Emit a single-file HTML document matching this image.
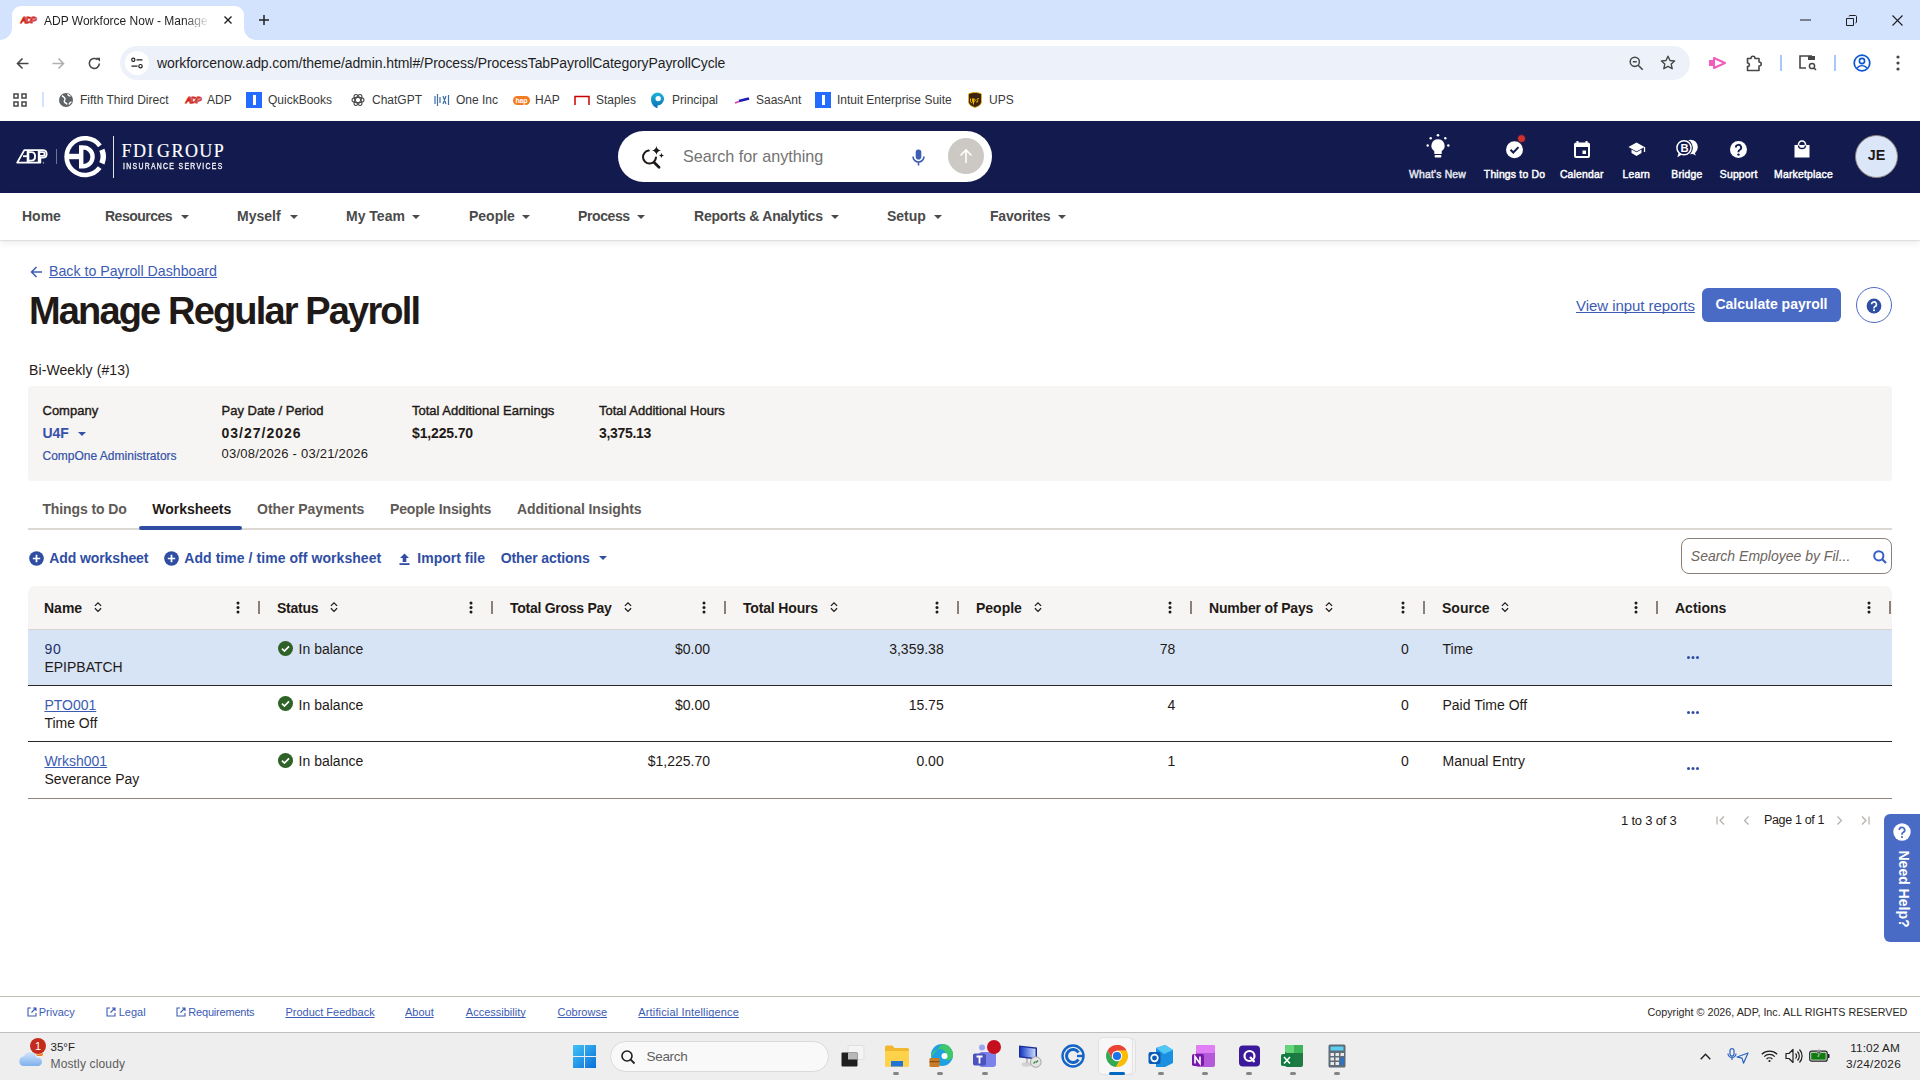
<!DOCTYPE html>
<html><head><meta charset="utf-8">
<style>
*{box-sizing:border-box;margin:0;padding:0}
html,body{width:1920px;height:1080px;overflow:hidden;background:#fff;font-family:"Liberation Sans",sans-serif;color:#1f1f1f}
.a{position:absolute;white-space:nowrap;line-height:1}
svg{position:absolute;overflow:visible}
.bm{font-size:12px;color:#3a3a3a;top:93.6px}
.nv{font-size:14px;font-weight:bold;color:#4a4a4a;top:209.4px}
.car{position:absolute;width:0;height:0;border-left:4px solid transparent;border-right:4px solid transparent;border-top:4px solid #4a4a4a;top:215px}
.hl{font-size:10.4px;color:#fff;top:169.8px;letter-spacing:0.2px;-webkit-text-stroke:0.45px #fff}
.th{font-size:14px;font-weight:bold;color:#1f1a17;top:600.6px}
.srt{position:relative !important;display:inline-block;margin-left:12px;top:1.4px;vertical-align:top}
.td{font-size:14px;color:#1f1a17}
.ft{font-size:11px;color:#3c5cb4;top:1006.9px;text-decoration:underline;text-underline-offset:1.2px;text-decoration-skip-ink:none}
.tbi{position:absolute;top:1072.3px;width:6px;height:3px;border-radius:1.5px;background:#858585}
</style></head><body>
<!-- ============ TAB STRIP ============ -->
<div style="position:absolute;left:0;top:0;width:1920px;height:40px;background:#d3e3fd"></div>
<div style="position:absolute;left:12px;top:6px;width:232px;height:34px;background:#fff;border-radius:9px 9px 0 0"></div>
<div style="position:absolute;left:0px;top:28px;width:12px;height:12px;background:radial-gradient(circle at 0 0,#d3e3fd 11.5px,#fff 12.2px)"></div>
<div style="position:absolute;left:244px;top:28px;width:12px;height:12px;background:radial-gradient(circle at 100% 0,#d3e3fd 11.5px,#fff 12.2px)"></div>
<svg style="left:20px;top:15.5px" width="16" height="8" viewBox="0 0 32 16"><text x="1" y="14.5" font-family="Liberation Sans" font-weight="bold" font-style="italic" font-size="17.5" fill="#fff" stroke="#d0271d" stroke-width="1.7" letter-spacing="-2.4">ADP</text></svg>
<div class="a" style="left:44px;top:14.6px;font-size:12px;color:#1f1f1f;width:166px;overflow:hidden;-webkit-mask-image:linear-gradient(90deg,#000 140px,transparent 166px)">ADP Workforce Now - Manage Regular Payroll</div>
<svg style="left:224px;top:16px" width="8" height="8"><path d="M0.5 0.5l7 7M7.5 0.5l-7 7" stroke="#1f1f1f" stroke-width="1.4"/></svg>
<svg style="left:259px;top:15px" width="10" height="10"><path d="M5 0v10M0 5h10" stroke="#1f1f1f" stroke-width="1.5"/></svg>
<svg style="left:1800px;top:19px" width="11" height="2"><path d="M0 1h11" stroke="#1f1f1f" stroke-width="1"/></svg>
<svg style="left:1846px;top:15px" width="11" height="11"><path d="M0.5 3.5h7v7h-7z" stroke="#1f1f1f" stroke-width="1" fill="none"/><path d="M3 1.5c0-1 .5-1 1-1h5.5c.5 0 1 .5 1 1V7c0 .5-.5 1-1 1" stroke="#1f1f1f" stroke-width="1" fill="none"/></svg>
<svg style="left:1892px;top:15px" width="11" height="11"><path d="M0.5 0.5l10 10M10.5 0.5l-10 10" stroke="#1f1f1f" stroke-width="1.1"/></svg>

<!-- ============ TOOLBAR ============ -->
<div style="position:absolute;left:0;top:40px;width:1920px;height:81px;background:#fff"></div>
<svg style="left:16px;top:57px" width="13" height="13"><path d="M12.5 6.5H1.5M6.5 1.5l-5 5 5 5" stroke="#474747" stroke-width="1.6" fill="none"/></svg>
<svg style="left:52px;top:57px" width="13" height="13"><path d="M0.5 6.5h11M6.5 1.5l5 5-5 5" stroke="#b0b0b0" stroke-width="1.6" fill="none"/></svg>
<svg style="left:88px;top:57px" width="13" height="13"><path d="M11.3 6.5A5 5 0 1 1 9.5 2.6" stroke="#474747" stroke-width="1.6" fill="none"/><path d="M8 0.8h4v4z" fill="#474747"/></svg>
<div style="position:absolute;left:120px;top:46px;width:1570px;height:34px;background:#edf2fa;border-radius:17px"></div>
<div style="position:absolute;left:125px;top:51px;width:24px;height:24px;border-radius:12px;background:#fff"></div>
<svg style="left:131px;top:57px" width="12" height="12"><circle cx="2.3" cy="2.8" r="1.6" stroke="#1f1f1f" stroke-width="1.2" fill="none"/><path d="M5.5 2.8h6M0.5 9.2h6" stroke="#1f1f1f" stroke-width="1.2"/><circle cx="9.5" cy="9.2" r="1.7" stroke="#1f1f1f" stroke-width="1.2" fill="none"/></svg>
<div class="a" style="left:157px;top:56.2px;font-size:14px;color:#1f1f1f;letter-spacing:-0.08px">workforcenow.adp.com/theme/admin.html#/Process/ProcessTabPayrollCategoryPayrollCycle</div>
<svg style="left:1629px;top:56px" width="15" height="15"><circle cx="5.8" cy="5.8" r="4.6" stroke="#474747" stroke-width="1.5" fill="none"/><path d="M3.8 5.8h4M9.2 9.2l4.5 4.5" stroke="#474747" stroke-width="1.6"/></svg>
<svg style="left:1660px;top:55px" width="16" height="16"><path d="M8 1.2l2 4.3 4.6.5-3.4 3.1 1 4.6L8 11.4l-4.2 2.3 1-4.6L1.4 6l4.6-.5z" stroke="#474747" stroke-width="1.4" fill="none" stroke-linejoin="round"/></svg>
<svg style="left:1709px;top:56px" width="18" height="14"><path d="M0 4h4v6H0z" fill="#f35bbd"/><path d="M5 2l11 5-11 5z" stroke="#f35bbd" stroke-width="2" fill="none" stroke-linejoin="round"/></svg>
<svg style="left:1746px;top:54px" width="17" height="18"><path d="M1.5 4.5h3.5c0-3 4-3 4 0h4v3.5c3 0 3 4 0 4v4.5h-11.5v-4c2.5 0 2.5-3.5 0-3.5z" stroke="#474747" stroke-width="1.6" fill="none" stroke-linejoin="round"/></svg>
<div style="position:absolute;left:1780px;top:55px;width:2px;height:16px;background:#a8c7fa"></div>
<svg style="left:1799px;top:55px" width="18" height="16"><path d="M13 1H1v12h6" stroke="#474747" stroke-width="1.6" fill="none"/><path d="M9 1h7v4H9z" fill="#474747"/><circle cx="13" cy="11" r="2.6" stroke="#474747" stroke-width="1.5" fill="none"/><path d="M14.8 12.8l2.2 2.2" stroke="#474747" stroke-width="1.6"/></svg>
<div style="position:absolute;left:1834px;top:55px;width:2px;height:16px;background:#a8c7fa"></div>
<svg style="left:1853px;top:54px" width="18" height="18"><circle cx="9" cy="9" r="7.8" stroke="#0b57d0" stroke-width="1.7" fill="none"/><circle cx="9" cy="7" r="2.6" stroke="#0b57d0" stroke-width="1.6" fill="none"/><path d="M4 14c3-3 7-3 10 0" stroke="#0b57d0" stroke-width="1.6" fill="none"/></svg>
<svg style="left:1896px;top:55px" width="4" height="16"><circle cx="2" cy="2" r="1.6" fill="#474747"/><circle cx="2" cy="8" r="1.6" fill="#474747"/><circle cx="2" cy="14" r="1.6" fill="#474747"/></svg>

<!-- bookmarks -->
<svg style="left:13px;top:93px" width="14" height="14"><path d="M1 1h4v4H1zM9 1h4v4H9zM1 9h4v4H1zM9 9h4v4H9z" stroke="#474747" stroke-width="1.5" fill="none"/></svg>
<div style="position:absolute;left:42px;top:92px;width:2px;height:15px;background:#d3e3fd"></div>
<svg style="left:59px;top:93px" width="14" height="14"><circle cx="7" cy="7" r="7" fill="#5f6368"/><path d="M3 2.5c1 1.5 2.5 1.5 3 3s-1.5 2-.5 3.5 2 .5 2.5 2.5M9 1c0 1.5 1 2 2.5 2M12.5 9c-1.5 0-2 1-2.5 2.5" stroke="#fff" stroke-width="1.4" fill="none"/></svg>
<div class="a bm" style="left:80px">Fifth Third Direct</div>
<svg style="left:185px;top:96px" width="16" height="8" viewBox="0 0 32 16"><text x="1" y="14.5" font-family="Liberation Sans" font-weight="bold" font-style="italic" font-size="17.5" fill="#fff" stroke="#d0271d" stroke-width="1.7" letter-spacing="-2.4">ADP</text></svg>
<div class="a bm" style="left:207px">ADP</div>
<div style="position:absolute;left:246px;top:92px;width:16px;height:16px;background:#236cff"></div>
<div style="position:absolute;left:252.5px;top:95px;width:3px;height:10px;background:#fff"></div>
<div class="a bm" style="left:268px">QuickBooks</div>
<svg style="left:351px;top:93px" width="14" height="14" viewBox="0 0 14 14"><g fill="none" stroke="#4a4a4a" stroke-width="1.15"><ellipse cx="7" cy="7" rx="6" ry="2.6"/><ellipse cx="7" cy="7" rx="6" ry="2.6" transform="rotate(60 7 7)"/><ellipse cx="7" cy="7" rx="6" ry="2.6" transform="rotate(120 7 7)"/></g></svg>
<div class="a bm" style="left:372px">ChatGPT</div>
<svg style="left:434px;top:92px" width="16" height="16"><path d="M1 4v8M3.5 2v12M6 5v6M9 4l3 8M12 4l-3 8M14.5 3v10" stroke="#3d6fa6" stroke-width="1.2"/></svg>
<div class="a bm" style="left:456px">One Inc</div>
<div style="position:absolute;left:513px;top:96px;width:17px;height:8.5px;border-radius:4.3px;background:#f37b20"></div>
<div class="a" style="left:515.5px;top:96.6px;font-size:7px;font-weight:bold;color:#fff;letter-spacing:-0.2px">hap</div>
<div class="a bm" style="left:535px">HAP</div>
<svg style="left:574px;top:95px" width="16" height="12"><path d="M1 10V1.5h14V10" stroke="#cc0000" stroke-width="1.5" fill="none"/></svg>
<div class="a bm" style="left:596px">Staples</div>
<svg style="left:650px;top:91px" width="16" height="18" viewBox="0 0 16 18"><defs><linearGradient id="pg" x1="0" y1="0" x2="0" y2="1"><stop offset="0" stop-color="#1fb5d6"/><stop offset="1" stop-color="#0a6eb8"/></linearGradient></defs><path d="M7.5 1.5A6.5 6.5 0 1 1 7.5 14.5V17.2C3.8 16.2 1 13 1 8A6.5 6.5 0 0 1 7.5 1.5z" fill="url(#pg)"/><circle cx="8.2" cy="7.6" r="2.7" fill="#fff"/></svg>
<div class="a bm" style="left:672px">Principal</div>
<svg style="left:735px;top:97px" width="15" height="7"><path d="M4 4l10-2.5" stroke="#1b1bb4" stroke-width="2.5"/><path d="M0 6l4-1.5" stroke="#e535ab" stroke-width="1.5"/></svg>
<div class="a bm" style="left:756px">SaasAnt</div>
<div style="position:absolute;left:815px;top:92px;width:16px;height:16px;background:#236cff"></div>
<div style="position:absolute;left:821.5px;top:95px;width:3px;height:10px;background:#fff"></div>
<div class="a bm" style="left:837px">Intuit Enterprise Suite</div>
<svg style="left:968px;top:92px" width="14" height="16"><path d="M7 0.5C4.5 0.5 2 1 0.5 2v7.5c0 3 3 5 6.5 6 3.5-1 6.5-3 6.5-6V2C12 1 9.5.5 7 .5z" fill="#3a2410" stroke="#f7b500" stroke-width="0.8"/><path d="M2.5 6.5v3c0 1.5 2 1.5 2 0v-3M5.5 6.5v6M5.5 7c2-1 2.5 3 0 3M11 6.8c-1.5-.7-2.5.5-1.5 1.5s0 2.5-1.5 1.5" stroke="#f7b500" stroke-width="1" fill="none"/></svg>
<div class="a bm" style="left:989px">UPS</div>

<!-- ============ ADP HEADER ============ -->
<div style="position:absolute;left:0;top:121px;width:1920px;height:72px;background:#131b4e"></div>
<svg style="left:12px;top:144px" width="40" height="24" viewBox="0 0 40 24"><g stroke="#fff" fill="none"><path d="M12.3 6.1H30.8C33.3 6.1 34.6 8 34.6 9.9C34.6 12 33.1 13.5 30.9 13.5H28.3V18.6H5.2z" stroke-width="1.9" stroke-linejoin="round"/><path d="M16 7v11" stroke-width="2.6"/><path d="M11 12.2h5" stroke-width="1.8"/><path d="M17 8.1h2.2c2.6 0 3.9 2 3.9 4.2s-1.3 4.3-3.9 4.3H17" stroke-width="1.9"/><path d="M27 7v11.6" stroke-width="2.4"/><path d="M28 8.1h2.6c1.4 0 2 .9 2 1.8s-.7 1.8-2 1.8H28" stroke-width="1.6"/></g><circle cx="31.4" cy="18.8" r="0.6" fill="#fff"/></svg>
<div style="position:absolute;left:56px;top:149px;width:1px;height:15px;background:#6f7598"></div>
<svg style="left:64px;top:135px" width="44" height="44" viewBox="0 0 44 44"><path d="M35.9 10.8A18.4 18.4 0 1 0 35.7 32.7" stroke="#fff" stroke-width="4.6" fill="none"/><path d="M37.9 14.8A18.2 18.2 0 0 1 37.9 28.4" stroke="#fff" stroke-width="5.5" fill="none"/><path d="M17.2 10.2V33.4M17.2 12.4h2a9.4 9.4 0 0 1 0 18.8h-2" stroke="#fff" stroke-width="4.4" fill="none"/><rect x="4.7" y="18.8" width="14.3" height="5.4" fill="#fff"/></svg>
<div style="position:absolute;left:112.8px;top:136px;width:1.3px;height:42px;background:#e2e3ea"></div>
<div class="a" style="left:121.5px;top:141.8px;font-family:'Liberation Serif',serif;font-size:18px;color:#fff;letter-spacing:1.4px;word-spacing:-3.5px;-webkit-text-stroke:0.15px #fff">FDI GROUP</div>
<div class="a" style="left:122.6px;top:162.2px;font-size:9px;color:#f4f4f8;letter-spacing:1.75px;-webkit-text-stroke:0.35px #f4f4f8;transform:scaleX(0.76);transform-origin:0 0">INSURANCE SERVICES</div>

<!-- search -->
<div style="position:absolute;left:618px;top:131px;width:374px;height:51px;background:#fff;border-radius:25.5px"></div>
<svg style="left:636px;top:141px" width="34" height="30" viewBox="0 0 34 30"><path d="M12.8 9.6A6.5 6.5 0 1 0 20 16.4" stroke="#1f1a17" stroke-width="2" fill="none" stroke-linecap="round"/><path d="M18.2 21.6L23 26.2" stroke="#1f1a17" stroke-width="2.8" stroke-linecap="round"/><path d="M20.4 5Q21 9 25 9.4Q21 10 20.4 14Q19.8 10 16 9.4Q19.8 9 20.4 5z" fill="#1f1a17"/><path d="M25.4 12Q25.7 14.1 28 14.4Q25.7 14.7 25.4 17Q25.1 14.7 23 14.4Q25.1 14.1 25.4 12z" fill="#1f1a17"/></svg>
<div class="a" style="left:683px;top:148px;font-size:16.2px;color:#737373">Search for anything</div>
<svg style="left:912px;top:149px" width="13" height="17" viewBox="0 0 13 17"><rect x="3.7" y="0.5" width="5.6" height="10" rx="2.8" fill="#3d5db3"/><path d="M1 7.5a5.5 5.5 0 0 0 11 0M6.5 13v3.5" stroke="#3d5db3" stroke-width="1.6" fill="none"/></svg>
<div style="position:absolute;left:948px;top:138px;width:36px;height:36px;border-radius:18px;background:#ccc8c3"></div>
<svg style="left:958px;top:148px" width="16" height="16"><path d="M8 15V2M2.5 7.5L8 2l5.5 5.5" stroke="#fff" stroke-width="1.6" fill="none"/></svg>

<!-- header right icons -->
<svg style="left:1426px;top:134px" width="26" height="25" viewBox="0 0 26 25"><circle cx="12" cy="1.3" r="1.3" fill="#fff"/><circle cx="4.7" cy="4.3" r="1.2" fill="#fff"/><circle cx="19.3" cy="4.3" r="1.2" fill="#fff"/><circle cx="1.7" cy="11.5" r="1.2" fill="#fff"/><circle cx="22.3" cy="11.5" r="1.2" fill="#fff"/><path d="M12 5.3a6.5 6.5 0 0 0-3.7 11.9V20h7.4v-2.8A6.5 6.5 0 0 0 12 5.3z" fill="#fff"/><rect x="8.6" y="21" width="6.8" height="2.4" rx="1" fill="#fff"/></svg>
<svg style="left:1506px;top:134px" width="20" height="25" viewBox="0 0 20 25"><circle cx="8.5" cy="15.7" r="8.5" fill="#fff"/><path d="M4.5 15.7l2.8 2.8 5.2-5.4" stroke="#131b4e" stroke-width="2" fill="none"/><circle cx="15.5" cy="4.6" r="4" fill="#d0312d" stroke="#131b4e" stroke-width="0.8"/></svg>
<svg style="left:1574px;top:141px" width="16" height="17" viewBox="0 0 16 17"><path d="M3.5 0v3M12.5 0v3" stroke="#fff" stroke-width="2"/><rect x="1" y="2.5" width="14" height="13.5" rx="1" stroke="#fff" stroke-width="2" fill="none"/><rect x="1" y="2.5" width="14" height="3.5" fill="#fff"/><rect x="8.5" y="9.5" width="3.5" height="3.5" fill="#fff"/></svg>
<svg style="left:1628px;top:142px" width="19" height="15" viewBox="0 0 19 15"><path d="M8.5 0.5L0.5 5l8 4.5 8-4.5z" fill="#fff"/><path d="M3.5 7.5v3.5l5 3 5-3V7.5l-5 2.8z" fill="#fff"/><path d="M16.5 5v5" stroke="#fff" stroke-width="1.3"/></svg>
<svg style="left:1670px;top:134px" width="34" height="28" viewBox="0 0 34 28"><circle cx="20.5" cy="13" r="7.3" fill="#fff"/><path d="M20 18.5L25.8 21.6 23.8 16.5z" fill="#fff"/><circle cx="14" cy="13.75" r="8.9" fill="#131b4e"/><circle cx="14" cy="13.75" r="7.1" stroke="#fff" stroke-width="1.5" fill="#131b4e"/><path d="M8.8 18.5L7.3 23.3 12 20.6z" fill="#fff"/><text x="10.6" y="18.2" font-family="Liberation Sans" font-weight="bold" font-size="11.2" fill="#fff">B</text></svg>
<svg style="left:1730px;top:141px" width="17" height="17" viewBox="0 0 17 17"><circle cx="8.5" cy="8.5" r="8.5" fill="#fff"/><path d="M5.8 6.5a2.7 2.7 0 1 1 3.8 2.5c-.8.4-1.1.9-1.1 1.7v.6" stroke="#131b4e" stroke-width="1.9" fill="none"/><circle cx="8.5" cy="13.6" r="1.2" fill="#131b4e"/></svg>
<svg style="left:1794px;top:140px" width="16" height="18" viewBox="0 0 16 18"><path d="M4.5 6V4.5a3.5 3.5 0 0 1 7 0V6" stroke="#fff" stroke-width="1.6" fill="none"/><path d="M0.5 5h15v12.5H0.5z" fill="#fff"/><path d="M4.5 5.5c0 4 7 4 7 0" stroke="#131b4e" stroke-width="1.4" fill="none"/></svg>
<div class="a hl" style="left:1387.5px;width:100px;text-align:center;color:#e6e6ee;-webkit-text-stroke:0.45px #e6e6ee">What's New</div>
<div class="a hl" style="left:1464.5px;width:100px;text-align:center">Things to Do</div>
<div class="a hl" style="left:1531.8px;width:100px;text-align:center">Calendar</div>
<div class="a hl" style="left:1586.3px;width:100px;text-align:center">Learn</div>
<div class="a hl" style="left:1636.9px;width:100px;text-align:center">Bridge</div>
<div class="a hl" style="left:1688.7px;width:100px;text-align:center">Support</div>
<div class="a hl" style="left:1753.5px;width:100px;text-align:center">Marketplace</div>
<div style="position:absolute;left:1855px;top:135px;width:43px;height:43px;border-radius:50%;background:#dbe6f8;border:1.3px solid #8b817a"></div>
<div class="a" style="left:1826.5px;width:100px;text-align:center;top:148.3px;font-size:14.3px;font-weight:bold;color:#1f1a17">JE</div>

<!-- ============ NAV ============ -->
<div style="position:absolute;left:0;top:193px;width:1920px;height:47px;background:#fff;box-shadow:0 1px 1px rgba(0,0,0,.08),0 3px 7px rgba(0,0,0,.07)"></div>
<div class="a nv" style="left:22px">Home</div>
<div class="a nv" style="left:105px;letter-spacing:-0.5px">Resources</div><div class="car" style="left:180.5px"></div>
<div class="a nv" style="left:237px">Myself</div><div class="car" style="left:290px"></div>
<div class="a nv" style="left:346px">My Team</div><div class="car" style="left:412px"></div>
<div class="a nv" style="left:469px">People</div><div class="car" style="left:522px"></div>
<div class="a nv" style="left:578px;letter-spacing:-0.4px">Process</div><div class="car" style="left:637px"></div>
<div class="a nv" style="left:694px;letter-spacing:-0.2px">Reports &amp; Analytics</div><div class="car" style="left:831px"></div>
<div class="a nv" style="left:887px">Setup</div><div class="car" style="left:934px"></div>
<div class="a nv" style="left:990px;letter-spacing:-0.2px">Favorites</div><div class="car" style="left:1058px"></div>
<!-- ============ CONTENT ============ -->
<svg style="left:30px;top:266px" width="13" height="12" viewBox="0 0 13 12"><path d="M12 6H1.5M6.5 1L1.5 6l5 5" stroke="#3c5cb4" stroke-width="1.5" fill="none"/></svg>
<div class="a" style="left:49px;top:264.2px;font-size:14.2px;color:#3c5cb4;text-decoration:underline;text-underline-offset:1px;text-decoration-skip-ink:none">Back to Payroll Dashboard</div>
<div class="a" style="left:29px;top:292px;font-size:38px;font-weight:bold;color:#1f1a17;letter-spacing:-1.85px">Manage Regular Payroll</div>
<div class="a" style="left:1576px;top:297.5px;font-size:15px;color:#3c5cb4;text-decoration:underline;text-underline-offset:1px;text-decoration-skip-ink:none;letter-spacing:-0.05px">View input reports</div>
<div style="position:absolute;left:1702px;top:288px;width:139px;height:34px;background:#4a6bc5;border-radius:6px"></div>
<div class="a" style="left:1702px;width:139px;text-align:center;top:297.3px;font-size:14px;font-weight:bold;color:#fff">Calculate payroll</div>
<div style="position:absolute;left:1856px;top:287px;width:36px;height:36px;border-radius:50%;border:1.2px solid #4a6bc5"></div>
<svg style="left:1865.6px;top:298px" width="16" height="16" viewBox="0 0 16 16"><circle cx="8" cy="8" r="7.4" fill="#2e4ea3"/><path d="M5.6 6.3a2.4 2.4 0 1 1 3.4 2.2c-.7.3-1 .8-1 1.5v.4" stroke="#fff" stroke-width="1.6" fill="none"/><circle cx="8" cy="12.3" r="1" fill="#fff"/></svg>
<div class="a" style="left:29px;top:362.6px;font-size:14px;color:#1f1a17;letter-spacing:0.1px">Bi-Weekly (#13)</div>

<!-- summary panel -->
<div style="position:absolute;left:28px;top:386px;width:1864px;height:95px;background:#f6f5f3;border-radius:4px"></div>
<div class="a" style="left:42.5px;top:403.6px;font-size:13px;color:#1f1a17;letter-spacing:0px;-webkit-text-stroke:0.4px #1f1a17">Company</div>
<div class="a" style="left:42.5px;top:426px;font-size:14px;font-weight:bold;color:#3650a8;letter-spacing:-0.1px">U4F</div>
<div class="car" style="left:77.5px;top:432px;border-top-color:#3650a8;border-left-width:4px;border-right-width:4px;border-top-width:4.5px"></div>
<div class="a" style="left:42.5px;top:449.9px;font-size:12px;color:#3452a8;-webkit-text-stroke:0.2px #3452a8">CompOne Administrators</div>
<div class="a" style="left:221.5px;top:403.6px;font-size:13px;color:#1f1a17;letter-spacing:0px;-webkit-text-stroke:0.4px #1f1a17">Pay Date / Period</div>
<div class="a" style="left:221.5px;top:426px;font-size:14px;font-weight:bold;color:#1f1a17;letter-spacing:1px">03/27/2026</div>
<div class="a" style="left:221.5px;top:447.2px;font-size:13px;color:#1f1a17;letter-spacing:0.22px">03/08/2026 - 03/21/2026</div>
<div class="a" style="left:412px;top:403.6px;font-size:13px;color:#1f1a17;letter-spacing:0px;-webkit-text-stroke:0.4px #1f1a17">Total Additional Earnings</div>
<div class="a" style="left:412px;top:426px;font-size:14px;font-weight:bold;color:#1f1a17;letter-spacing:-0.15px">$1,225.70</div>
<div class="a" style="left:599px;top:403.6px;font-size:13px;color:#1f1a17;letter-spacing:0px;-webkit-text-stroke:0.4px #1f1a17">Total Additional Hours</div>
<div class="a" style="left:599px;top:426px;font-size:14px;font-weight:bold;color:#1f1a17;letter-spacing:-0.3px">3,375.13</div>

<!-- tabs -->
<div style="position:absolute;left:28px;top:528px;width:1864px;height:1.5px;background:#dcd8d3"></div>
<div class="a" style="left:42.4px;top:502.2px;font-size:14px;font-weight:bold;color:#5e5a57;letter-spacing:-0.1px">Things to Do</div>
<div class="a" style="left:152.2px;top:502.2px;font-size:14px;font-weight:bold;color:#1f1a17">Worksheets</div>
<div class="a" style="left:257px;top:502.2px;font-size:14px;font-weight:bold;color:#5e5a57">Other Payments</div>
<div class="a" style="left:390px;top:502.2px;font-size:14px;font-weight:bold;color:#5e5a57;letter-spacing:-0.15px">People Insights</div>
<div class="a" style="left:517.1px;top:502.2px;font-size:14px;font-weight:bold;color:#5e5a57;letter-spacing:-0.08px">Additional Insights</div>
<div style="position:absolute;left:138.5px;top:526.4px;width:103px;height:4px;background:#2f4ea3;border-radius:2px"></div>

<!-- actions -->
<svg style="left:29px;top:550.5px" width="15" height="15" viewBox="0 0 15 15"><circle cx="7.5" cy="7.5" r="7.3" fill="#2f4ea3"/><path d="M7.5 3.8v7.4M3.8 7.5h7.4" stroke="#fff" stroke-width="1.7"/></svg>
<div class="a" style="left:49.3px;top:551.2px;font-size:14px;font-weight:bold;color:#2f4ea3;letter-spacing:-0.1px">Add worksheet</div>
<svg style="left:164.3px;top:550.5px" width="15" height="15" viewBox="0 0 15 15"><circle cx="7.5" cy="7.5" r="7.3" fill="#2f4ea3"/><path d="M7.5 3.8v7.4M3.8 7.5h7.4" stroke="#fff" stroke-width="1.7"/></svg>
<div class="a" style="left:184.3px;top:551.2px;font-size:14px;font-weight:bold;color:#2f4ea3;letter-spacing:0.06px">Add time / time off worksheet</div>
<svg style="left:399.3px;top:552.5px" width="11" height="12" viewBox="0 0 11 12"><path d="M5.5 0.5L1 5h2.7v4h3.6V5H10z" fill="#2f4ea3"/><rect x="0.5" y="10.2" width="10" height="1.8" fill="#2f4ea3"/></svg>
<div class="a" style="left:417.3px;top:551.2px;font-size:14px;font-weight:bold;color:#2f4ea3">Import file</div>
<div class="a" style="left:500.7px;top:551.2px;font-size:14px;font-weight:bold;color:#2f4ea3;letter-spacing:-0.1px">Other actions</div>
<div class="car" style="left:598.5px;top:556px;border-top-color:#2f4ea3"></div>
<div style="position:absolute;left:1681px;top:538px;width:211px;height:36px;border:1.3px solid #8b817a;border-radius:8px;background:#fff"></div>
<div class="a" style="left:1690.8px;top:549.2px;font-size:14px;font-style:italic;color:#6e655e">Search Employee by Fil...</div>
<svg style="left:1872.5px;top:549.5px" width="14" height="14" viewBox="0 0 14 14"><circle cx="5.8" cy="5.8" r="4.6" stroke="#3a5fc4" stroke-width="2" fill="none"/><path d="M9.2 9.2l3.8 3.8" stroke="#3a5fc4" stroke-width="2.2"/></svg>
<!-- table -->
<div style="position:absolute;left:28px;top:586px;width:1864px;height:43.5px;background:#f6f5f3;border-radius:7px 7px 0 0"></div>
<div style="position:absolute;left:28px;top:629px;width:1864px;height:1px;background:#d9d5d0"></div>
<div style="position:absolute;left:28px;top:630px;width:1864px;height:55px;background:#d7e4f6"></div>
<div style="position:absolute;left:28px;top:684.5px;width:1864px;height:1.5px;background:#2b2725"></div>
<div style="position:absolute;left:28px;top:740.5px;width:1864px;height:1.5px;background:#2b2725"></div>
<div style="position:absolute;left:28px;top:797.5px;width:1864px;height:1.3px;background:#8f8883"></div>
<div class="a th" style="left:44px">Name<svg class="srt" width="8" height="10" viewBox="0 0 8 10"><path d="M0.9 3.9L4 0.8 7.1 3.9M0.9 6.3L4 9.4 7.1 6.3" stroke="#1f1a17" stroke-width="1.25" fill="none"/></svg></div>
<svg style="left:236px;top:601px" width="4" height="13" viewBox="0 0 4 13"><circle cx="2" cy="2" r="1.5" fill="#1f1a17"/><circle cx="2" cy="6.5" r="1.5" fill="#1f1a17"/><circle cx="2" cy="11" r="1.5" fill="#1f1a17"/></svg>
<div style="position:absolute;left:258px;top:601px;width:2px;height:13px;background:#8b817a"></div>
<div class="a th" style="left:277px;letter-spacing:-0.25px">Status<svg class="srt" width="8" height="10" viewBox="0 0 8 10"><path d="M0.9 3.9L4 0.8 7.1 3.9M0.9 6.3L4 9.4 7.1 6.3" stroke="#1f1a17" stroke-width="1.25" fill="none"/></svg></div>
<svg style="left:469px;top:601px" width="4" height="13" viewBox="0 0 4 13"><circle cx="2" cy="2" r="1.5" fill="#1f1a17"/><circle cx="2" cy="6.5" r="1.5" fill="#1f1a17"/><circle cx="2" cy="11" r="1.5" fill="#1f1a17"/></svg>
<div style="position:absolute;left:491px;top:601px;width:2px;height:13px;background:#8b817a"></div>
<div class="a th" style="left:510px;letter-spacing:-0.27px">Total Gross Pay<svg class="srt" width="8" height="10" viewBox="0 0 8 10"><path d="M0.9 3.9L4 0.8 7.1 3.9M0.9 6.3L4 9.4 7.1 6.3" stroke="#1f1a17" stroke-width="1.25" fill="none"/></svg></div>
<svg style="left:702px;top:601px" width="4" height="13" viewBox="0 0 4 13"><circle cx="2" cy="2" r="1.5" fill="#1f1a17"/><circle cx="2" cy="6.5" r="1.5" fill="#1f1a17"/><circle cx="2" cy="11" r="1.5" fill="#1f1a17"/></svg>
<div style="position:absolute;left:724px;top:601px;width:2px;height:13px;background:#8b817a"></div>
<div class="a th" style="left:743px;letter-spacing:-0.16px">Total Hours<svg class="srt" width="8" height="10" viewBox="0 0 8 10"><path d="M0.9 3.9L4 0.8 7.1 3.9M0.9 6.3L4 9.4 7.1 6.3" stroke="#1f1a17" stroke-width="1.25" fill="none"/></svg></div>
<svg style="left:935px;top:601px" width="4" height="13" viewBox="0 0 4 13"><circle cx="2" cy="2" r="1.5" fill="#1f1a17"/><circle cx="2" cy="6.5" r="1.5" fill="#1f1a17"/><circle cx="2" cy="11" r="1.5" fill="#1f1a17"/></svg>
<div style="position:absolute;left:957px;top:601px;width:2px;height:13px;background:#8b817a"></div>
<div class="a th" style="left:976px">People<svg class="srt" width="8" height="10" viewBox="0 0 8 10"><path d="M0.9 3.9L4 0.8 7.1 3.9M0.9 6.3L4 9.4 7.1 6.3" stroke="#1f1a17" stroke-width="1.25" fill="none"/></svg></div>
<svg style="left:1168px;top:601px" width="4" height="13" viewBox="0 0 4 13"><circle cx="2" cy="2" r="1.5" fill="#1f1a17"/><circle cx="2" cy="6.5" r="1.5" fill="#1f1a17"/><circle cx="2" cy="11" r="1.5" fill="#1f1a17"/></svg>
<div style="position:absolute;left:1190px;top:601px;width:2px;height:13px;background:#8b817a"></div>
<div class="a th" style="left:1209px;letter-spacing:-0.17px">Number of Pays<svg class="srt" width="8" height="10" viewBox="0 0 8 10"><path d="M0.9 3.9L4 0.8 7.1 3.9M0.9 6.3L4 9.4 7.1 6.3" stroke="#1f1a17" stroke-width="1.25" fill="none"/></svg></div>
<svg style="left:1401px;top:601px" width="4" height="13" viewBox="0 0 4 13"><circle cx="2" cy="2" r="1.5" fill="#1f1a17"/><circle cx="2" cy="6.5" r="1.5" fill="#1f1a17"/><circle cx="2" cy="11" r="1.5" fill="#1f1a17"/></svg>
<div style="position:absolute;left:1423px;top:601px;width:2px;height:13px;background:#8b817a"></div>
<div class="a th" style="left:1442px">Source<svg class="srt" width="8" height="10" viewBox="0 0 8 10"><path d="M0.9 3.9L4 0.8 7.1 3.9M0.9 6.3L4 9.4 7.1 6.3" stroke="#1f1a17" stroke-width="1.25" fill="none"/></svg></div>
<svg style="left:1634px;top:601px" width="4" height="13" viewBox="0 0 4 13"><circle cx="2" cy="2" r="1.5" fill="#1f1a17"/><circle cx="2" cy="6.5" r="1.5" fill="#1f1a17"/><circle cx="2" cy="11" r="1.5" fill="#1f1a17"/></svg>
<div style="position:absolute;left:1656px;top:601px;width:2px;height:13px;background:#8b817a"></div>
<div class="a th" style="left:1675px">Actions</div>
<svg style="left:1867px;top:601px" width="4" height="13" viewBox="0 0 4 13"><circle cx="2" cy="2" r="1.5" fill="#1f1a17"/><circle cx="2" cy="6.5" r="1.5" fill="#1f1a17"/><circle cx="2" cy="11" r="1.5" fill="#1f1a17"/></svg>
<div style="position:absolute;left:1889px;top:601px;width:2px;height:13px;background:#8b817a"></div>
<div class="a td" style="left:44.4px;top:641.9px;color:#23306a;letter-spacing:0.8px">90</div>
<div class="a td" style="left:44.4px;top:659.9px">EPIPBATCH</div>
<svg style="left:278px;top:640.7px" width="15" height="15" viewBox="0 0 15 15"><circle cx="7.5" cy="7.5" r="7.5" fill="#2e6226"/><path d="M4 7.7l2.4 2.4 4.6-4.8" stroke="#fff" stroke-width="1.7" fill="none"/></svg>
<div class="a td" style="left:298.6px;top:641.9px">In balance</div>
<div class="a td" style="left:510px;width:200px;text-align:right;top:641.9px">$0.00</div>
<div class="a td" style="left:743.7px;width:200px;text-align:right;top:641.9px">3,359.38</div>
<div class="a td" style="left:975.4000000000001px;width:200px;text-align:right;top:641.9px">78</div>
<div class="a td" style="left:1208.7px;width:200px;text-align:right;top:641.9px">0</div>
<div class="a td" style="left:1442.5px;top:641.9px">Time</div>
<svg style="left:1686.5px;top:655.5px" width="12" height="3" viewBox="0 0 12 3"><circle cx="1.5" cy="1.5" r="1.5" fill="#2f4ea3"/><circle cx="6" cy="1.5" r="1.5" fill="#2f4ea3"/><circle cx="10.5" cy="1.5" r="1.5" fill="#2f4ea3"/></svg>
<div class="a td" style="left:44.4px;top:697.7px;color:#3c5cb4;text-decoration:underline;text-underline-offset:1px;text-decoration-skip-ink:none">PTO001</div>
<div class="a td" style="left:44.4px;top:715.7px">Time Off</div>
<svg style="left:278px;top:696.4px" width="15" height="15" viewBox="0 0 15 15"><circle cx="7.5" cy="7.5" r="7.5" fill="#2e6226"/><path d="M4 7.7l2.4 2.4 4.6-4.8" stroke="#fff" stroke-width="1.7" fill="none"/></svg>
<div class="a td" style="left:298.6px;top:697.7px">In balance</div>
<div class="a td" style="left:510px;width:200px;text-align:right;top:697.7px">$0.00</div>
<div class="a td" style="left:743.7px;width:200px;text-align:right;top:697.7px">15.75</div>
<div class="a td" style="left:975.4000000000001px;width:200px;text-align:right;top:697.7px">4</div>
<div class="a td" style="left:1208.7px;width:200px;text-align:right;top:697.7px">0</div>
<div class="a td" style="left:1442.5px;top:697.7px">Paid Time Off</div>
<svg style="left:1686.5px;top:711.2px" width="12" height="3" viewBox="0 0 12 3"><circle cx="1.5" cy="1.5" r="1.5" fill="#2f4ea3"/><circle cx="6" cy="1.5" r="1.5" fill="#2f4ea3"/><circle cx="10.5" cy="1.5" r="1.5" fill="#2f4ea3"/></svg>
<div class="a td" style="left:44.4px;top:753.7px;color:#3c5cb4;text-decoration:underline;text-underline-offset:1px;text-decoration-skip-ink:none">Wrksh001</div>
<div class="a td" style="left:44.4px;top:771.7px">Severance Pay</div>
<svg style="left:278px;top:752.5px" width="15" height="15" viewBox="0 0 15 15"><circle cx="7.5" cy="7.5" r="7.5" fill="#2e6226"/><path d="M4 7.7l2.4 2.4 4.6-4.8" stroke="#fff" stroke-width="1.7" fill="none"/></svg>
<div class="a td" style="left:298.6px;top:753.7px">In balance</div>
<div class="a td" style="left:510px;width:200px;text-align:right;top:753.7px">$1,225.70</div>
<div class="a td" style="left:743.7px;width:200px;text-align:right;top:753.7px">0.00</div>
<div class="a td" style="left:975.4000000000001px;width:200px;text-align:right;top:753.7px">1</div>
<div class="a td" style="left:1208.7px;width:200px;text-align:right;top:753.7px">0</div>
<div class="a td" style="left:1442.5px;top:753.7px">Manual Entry</div>
<svg style="left:1686.5px;top:767.3px" width="12" height="3" viewBox="0 0 12 3"><circle cx="1.5" cy="1.5" r="1.5" fill="#2f4ea3"/><circle cx="6" cy="1.5" r="1.5" fill="#2f4ea3"/><circle cx="10.5" cy="1.5" r="1.5" fill="#2f4ea3"/></svg>

<!-- pagination -->
<div class="a" style="left:1621px;top:814px;font-size:13px;color:#1f1a17;letter-spacing:-0.2px">1 to 3 of 3</div>
<svg style="left:1715.5px;top:816px" width="9" height="9" viewBox="0 0 9 9"><path d="M1 0.5v8M8 0.5l-4 4 4 4" stroke="#b3aea9" stroke-width="1.2" fill="none"/></svg>
<svg style="left:1742.5px;top:816px" width="6" height="9" viewBox="0 0 6 9"><path d="M5.5 0.5l-4 4 4 4" stroke="#b3aea9" stroke-width="1.2" fill="none"/></svg>
<div class="a" style="left:1764px;top:814px;font-size:12.5px;color:#1f1a17;letter-spacing:-0.35px">Page 1 of 1</div>
<svg style="left:1837px;top:816px" width="6" height="9" viewBox="0 0 6 9"><path d="M0.5 0.5l4 4-4 4" stroke="#b3aea9" stroke-width="1.2" fill="none"/></svg>
<svg style="left:1861px;top:816px" width="9" height="9" viewBox="0 0 9 9"><path d="M8 0.5v8M1 0.5l4 4-4 4" stroke="#b3aea9" stroke-width="1.2" fill="none"/></svg>

<!-- need help -->
<div style="position:absolute;left:1884px;top:814px;width:40px;height:128px;background:#4a6bc5;border-radius:6px 0 0 6px"></div>
<svg style="left:1893.3px;top:823.3px" width="18" height="18" viewBox="0 0 18 18"><circle cx="9" cy="9" r="8.7" fill="#fff"/><path d="M6.3 7a2.7 2.7 0 1 1 3.8 2.5c-.8.4-1.1.9-1.1 1.7v.5" stroke="#4a6bc5" stroke-width="1.8" fill="none"/><circle cx="9" cy="14" r="1.1" fill="#4a6bc5"/></svg>
<div class="a" style="left:1864px;top:882px;width:80px;text-align:center;font-size:14px;font-weight:bold;color:#fff;transform:rotate(90deg);transform-origin:center center">Need Help?</div>

<!-- footer -->
<div style="position:absolute;left:0;top:995.5px;width:1920px;height:1.5px;background:#c2bcb6"></div>
<svg style="left:27px;top:1007px" width="10" height="10" viewBox="0 0 10 10"><path d="M4 1H1v8h8V6M6 1h3v3M9 1L4.5 5.5" stroke="#3c5cb4" stroke-width="1.1" fill="none"/></svg>
<div class="a ft" style="left:38.7px;text-decoration:none">Privacy</div>
<svg style="left:106px;top:1007px" width="10" height="10" viewBox="0 0 10 10"><path d="M4 1H1v8h8V6M6 1h3v3M9 1L4.5 5.5" stroke="#3c5cb4" stroke-width="1.1" fill="none"/></svg>
<div class="a ft" style="left:118.7px;text-decoration:none">Legal</div>
<svg style="left:176px;top:1007px" width="10" height="10" viewBox="0 0 10 10"><path d="M4 1H1v8h8V6M6 1h3v3M9 1L4.5 5.5" stroke="#3c5cb4" stroke-width="1.1" fill="none"/></svg>
<div class="a ft" style="left:188.3px;text-decoration:none;letter-spacing:-0.2px">Requirements</div>
<div class="a ft" style="left:285.4px">Product Feedback</div>
<div class="a ft" style="left:405px">About</div>
<div class="a ft" style="left:465.8px">Accessibility</div>
<div class="a ft" style="left:557.5px">Cobrowse</div>
<div class="a ft" style="left:638.3px;letter-spacing:0.15px">Artificial Intelligence</div>
<div class="a" style="left:1647.5px;top:1007px;font-size:10.75px;color:#2b2725">Copyright © 2026, ADP, Inc. ALL RIGHTS RESERVED</div>
<!-- ============ TASKBAR ============ -->
<div style="position:absolute;left:0;top:1031.5px;width:1920px;height:48.5px;background:#eeeeee;border-top:1px solid #bebebe"></div>
<svg style="left:16px;top:1049px" width="30" height="20" viewBox="0 0 30 20"><defs><linearGradient id="cl" x1="0" y1="0" x2="0" y2="1"><stop offset="0" stop-color="#cfe3fb"/><stop offset="1" stop-color="#7fb1ee"/></linearGradient></defs><path d="M7 17a5 5 0 0 1 1-9.8 6.5 6.5 0 0 1 12.4 1.5A4.3 4.3 0 0 1 23 17z" fill="url(#cl)"/></svg>
<div style="position:absolute;left:36px;top:1051px;width:7px;height:5px;border-radius:2px;background:#f07a12"></div><div style="position:absolute;left:30px;top:1038px;width:16px;height:16px;border-radius:50%;background:#c42b1c;box-shadow:0 0 0 0.6px #f4f4f4"></div>
<div class="a" style="left:30px;width:16px;text-align:center;top:1040.5px;font-size:11px;color:#fff">1</div>
<div class="a" style="left:50.5px;top:1042.2px;font-size:11.5px;color:#1f1f1f">35°F</div>
<div class="a" style="left:50.5px;top:1057.8px;font-size:12px;color:#5c5c5c;letter-spacing:0.15px">Mostly cloudy</div>

<svg style="left:573px;top:1045px" width="23" height="23" viewBox="0 0 23 23"><defs><linearGradient id="wn" x1="0" y1="0" x2="1" y2="1"><stop offset="0" stop-color="#42c3f7"/><stop offset="1" stop-color="#0a6fd8"/></linearGradient></defs><path d="M0 0h11v11H0zM12 0h11v11H12zM0 12h11v11H0zM12 12h11v11H12z" fill="url(#wn)"/></svg>
<div style="position:absolute;left:609.5px;top:1040.5px;width:219px;height:31px;border-radius:15.5px;background:#f9f9f9;border:1px solid #dadada"></div>
<svg style="left:621px;top:1049.5px" width="15" height="14" viewBox="0 0 15 14"><circle cx="6" cy="6" r="5" stroke="#1f1f1f" stroke-width="1.6" fill="none"/><path d="M9.7 9.7l3.8 3.8" stroke="#1f1f1f" stroke-width="1.8"/></svg>
<div class="a" style="left:646.5px;top:1049.6px;font-size:13.5px;color:#5f5f5f;letter-spacing:-0.3px">Search</div>
<svg style="left:841px;top:1044.5px" width="24" height="22" viewBox="0 0 24 22"><rect x="7" y="0.5" width="16" height="14" rx="1.5" fill="#f4f4f4" stroke="#dcdcdc" stroke-width="0.8"/><rect x="0.5" y="7.5" width="16" height="14" rx="1" fill="#1f1f1f"/><rect x="7" y="7.5" width="9.5" height="7" fill="#b8b8b8"/></svg>
<svg style="left:885px;top:1045px" width="24" height="22" viewBox="0 0 24 22"><path d="M0 2a1.5 1.5 0 0 1 1.5-1.5h6l2 2.5H22.5A1.5 1.5 0 0 1 24 4.5V20a1.5 1.5 0 0 1-1.5 1.5h-21A1.5 1.5 0 0 1 0 20z" fill="#f0b72f"/><path d="M0 6h24v14a1.5 1.5 0 0 1-1.5 1.5h-21A1.5 1.5 0 0 1 0 20z" fill="#ffd24a"/><path d="M6 16h12v5.5H6z" rx="1.5" fill="#1f74d6"/></svg>
<svg style="left:929px;top:1044px" width="25" height="24" viewBox="0 0 25 24"><circle cx="13" cy="11" r="11" fill="#1fa0e0"/><path d="M13 0a11 11 0 0 1 11 11c0 3-2 5-5 5s-4-2-4-3 2-1 2-3-3-5-7-5-8 4-8 8" fill="#3ec86b"/><circle cx="15.5" cy="12" r="3" fill="#fff"/><rect x="0.5" y="14" width="10" height="9" rx="1.2" fill="#c87a24"/><rect x="0.5" y="17" width="10" height="1.2" fill="#8a4c10"/></svg>
<svg style="left:973px;top:1038px" width="30" height="30" viewBox="0 0 30 30"><circle cx="9" cy="9.5" r="3" fill="#9aa6f0"/><rect x="6" y="14" width="17" height="15" rx="3" fill="#7b83eb"/><rect x="0" y="15.5" width="13" height="12" rx="1.8" fill="#4b53bc"/><path d="M3.5 18.5h6M6.5 18.5v7" stroke="#fff" stroke-width="1.8"/><circle cx="21" cy="9" r="7" fill="#c50f1f"/></svg>
<svg style="left:1018px;top:1044px" width="24" height="24" viewBox="0 0 24 24"><defs><linearGradient id="rd" x1="0" y1="0" x2="1" y2="0"><stop offset="0" stop-color="#1a3ec8"/><stop offset="1" stop-color="#c9dcff"/></linearGradient></defs><ellipse cx="8.5" cy="20.5" rx="5" ry="2.2" fill="#d2d2d2"/><path d="M9 14v5" stroke="#bdbdbd" stroke-width="2"/><path d="M1 1.5L19 3.5V15.5L1 13.5z" fill="#1c2f9a"/><path d="M2.5 3L17.5 4.7V14L2.5 12.3z" fill="url(#rd)"/><circle cx="17.8" cy="18" r="5.3" fill="#e4e4e4" stroke="#9c9c9c" stroke-width="0.9"/><path d="M15.5 19.5l2-2M18 18.5l2-2" stroke="#2f8a3a" stroke-width="1.2"/></svg>
<svg style="left:1061px;top:1044px" width="24" height="24" viewBox="0 0 24 24"><circle cx="12" cy="12" r="10.5" stroke="#1464c7" stroke-width="2.4" fill="none"/><path d="M17.5 8.5a6.5 6.5 0 1 0 0 7" stroke="#1464c7" stroke-width="3" fill="none"/><path d="M16 12h6" stroke="#1464c7" stroke-width="2.4"/></svg>
<div style="position:absolute;left:1100px;top:1037.5px;width:36px;height:37.5px;border-radius:5px;background:#f3f3f3;border:1px solid #e0e0e0"></div><div style="position:absolute;left:1097.5px;top:1037px;width:35px;height:38px;border-radius:5px;background:#f7f7f7;border:1px solid #e2e2e2"></div>
<svg style="left:1105px;top:1044px" width="24" height="24" viewBox="0 0 24 24"><path d="M12 1A11 11 0 0 1 21.5 6.5H12z" fill="#ea4335"/><path d="M12 1a11 11 0 0 0-9.5 5.5L7.2 14.5 12 6.5h9.5A11 11 0 0 0 12 1z" fill="#ea4335"/><path d="M2.5 6.5A11 11 0 0 0 11 23l4.8-8.5-3.8 2.5-4.8-2.5z" fill="#34a853"/><path d="M21.5 6.5H12l3.8 8L11 23A11 11 0 0 0 21.5 6.5z" fill="#fbbc04"/><circle cx="12" cy="12" r="5.2" fill="#fff"/><circle cx="12" cy="12" r="4.1" fill="#1a73e8"/></svg>
<div style="position:absolute;left:1109px;top:1072px;width:16px;height:3px;border-radius:1.5px;background:#0067c0"></div>
<svg style="left:1148px;top:1045px" width="25" height="22" viewBox="0 0 25 22"><path d="M8 3l9-3 8 5v13l-8 4H8z" fill="#1b8fe0"/><path d="M8 3l9-3 8 5-9 4z" fill="#50c8f5"/><rect x="0.5" y="7" width="12" height="12" rx="2" fill="#0a5cb8"/><circle cx="6.5" cy="13" r="3.3" stroke="#fff" stroke-width="1.7" fill="none"/></svg>
<svg style="left:1192px;top:1045px" width="23" height="22" viewBox="0 0 23 22"><rect x="4" y="0" width="19" height="22" rx="2" fill="#b45ad9"/><rect x="4" y="0" width="19" height="8" rx="2" fill="#e07ef5"/><rect x="0" y="9" width="12" height="12" rx="1.8" fill="#7719aa"/><path d="M3 18.5v-7l5 7v-7" stroke="#fff" stroke-width="1.6" fill="none"/></svg>
<svg style="left:1239px;top:1045px" width="21" height="22" viewBox="0 0 21 22"><rect x="0" y="0.5" width="21" height="21" rx="4" fill="#3a1a9a"/><circle cx="10.5" cy="11" r="5" stroke="#fff" stroke-width="2.2" fill="none"/><path d="M11 12l4.5 5" stroke="#fff" stroke-width="2.2"/></svg>
<svg style="left:1281px;top:1045px" width="22" height="22" viewBox="0 0 22 22"><rect x="4" y="0" width="18" height="22" rx="2" fill="#1e7a42"/><rect x="4" y="0" width="18" height="8" rx="2" fill="#66d47a"/><rect x="13" y="0" width="9" height="8" fill="#3fb35a"/><rect x="0" y="9" width="12" height="12" rx="1.8" fill="#107c41"/><path d="M3 12l6 6.5M9 12l-6 6.5" stroke="#fff" stroke-width="1.6"/></svg>
<svg style="left:1328px;top:1044px" width="18" height="24" viewBox="0 0 18 24"><rect x="0.5" y="0.5" width="17" height="23" rx="1.5" fill="#5f6b76"/><rect x="2.5" y="2.5" width="13" height="4" fill="#5bd0f0"/><path d="M2.5 9h3.5v3H2.5zM7.5 9H11v3H7.5zM12.5 9H16v3h-3.5zM2.5 13.5h3.5v3H2.5zM7.5 13.5H11v3H7.5zM2.5 18h3.5v3H2.5zM7.5 18H11v3H7.5z" fill="#e9e9e9"/><rect x="12.5" y="13.5" width="3.5" height="7.5" fill="#2b73c7"/></svg>
<div class="tbi" style="left:893.3px"></div><div class="tbi" style="left:936.5px"></div><div class="tbi" style="left:982px"></div>
<div class="tbi" style="left:1158px"></div><div class="tbi" style="left:1202px"></div><div class="tbi" style="left:1246px"></div><div class="tbi" style="left:1290px"></div><div class="tbi" style="left:1334px"></div>

<!-- tray -->
<svg style="left:1699.5px;top:1052.5px" width="11" height="7" viewBox="0 0 11 7"><path d="M0.7 6.3L5.5 1.3l4.8 5" stroke="#1f1f1f" stroke-width="1.3" fill="none"/></svg>
<svg style="left:1726.5px;top:1048px" width="22" height="16" viewBox="0 0 22 16"><rect x="3" y="0.6" width="4" height="7.5" rx="2" stroke="#2a62c0" stroke-width="1.2" fill="none"/><path d="M1 5.5a4 4 0 0 0 8 0M5 9.5v2.5" stroke="#2a62c0" stroke-width="1.2" fill="none"/><path d="M21 5l-11 4 5 1.2 1.5 5z" stroke="#2a62c0" stroke-width="1.2" fill="none" stroke-linejoin="round"/></svg>
<svg style="left:1761px;top:1049.5px" width="17" height="12" viewBox="0 0 17 12"><path d="M0.8 4.2a11 11 0 0 1 15.4 0M3.2 6.6a7.6 7.6 0 0 1 10.6 0M5.6 9a4.2 4.2 0 0 1 5.8 0" stroke="#1f1f1f" stroke-width="1.2" fill="none"/><circle cx="8.5" cy="11" r="1.1" fill="#1f1f1f"/></svg>
<svg style="left:1784.5px;top:1047.5px" width="17" height="16" viewBox="0 0 17 16"><path d="M1 5.5h3l4-4v13l-4-4H1z" stroke="#1f1f1f" stroke-width="1.2" fill="none" stroke-linejoin="round"/><path d="M10.5 5.5a3.5 3.5 0 0 1 0 5M12.5 3.5a6.5 6.5 0 0 1 0 9M14.5 1.5a9.5 9.5 0 0 1 0 13" stroke="#1f1f1f" stroke-width="1.2" fill="none"/></svg>
<svg style="left:1809px;top:1047.5px" width="21" height="14" viewBox="0 0 21 14"><rect x="0.7" y="3.2" width="17.5" height="10" rx="2" stroke="#1f1f1f" stroke-width="1.2" fill="none"/><rect x="2.2" y="4.7" width="14.5" height="7" fill="#107c10"/><rect x="18.8" y="6" width="1.7" height="4" rx="0.6" fill="#1f1f1f"/><path d="M10.5 0l-3 5h2.5l-1 4 3-5h-2.5z" fill="#1f1f1f" stroke="#eee" stroke-width="0.5"/></svg>
<div class="a" style="left:1800px;width:100px;text-align:right;top:1043.1px;font-size:11.8px;color:#1f1f1f;letter-spacing:0.1px">11:02 AM</div>
<div class="a" style="left:1800px;width:101px;text-align:right;top:1058.9px;font-size:11.8px;color:#1f1f1f;letter-spacing:0.27px">3/24/2026</div>
</body></html>
